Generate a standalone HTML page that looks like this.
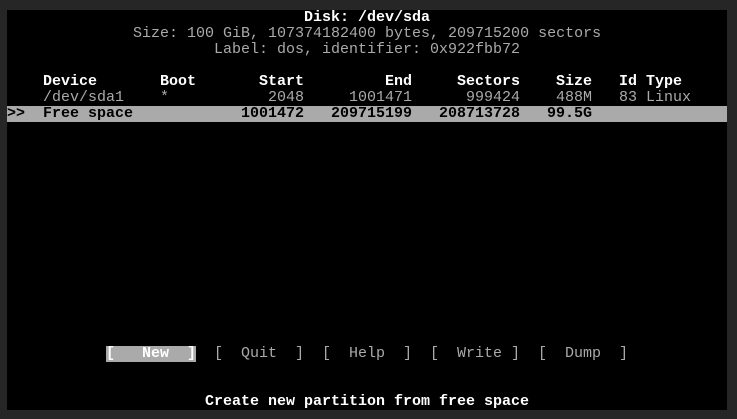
<!DOCTYPE html>
<html><head><meta charset="utf-8"><style>
html,body{margin:0;padding:0;background:#262626;width:737px;height:419px;overflow:hidden}
#t{position:absolute;left:7px;top:10px;width:720px;height:400px;background:#000;font-family:"Liberation Mono",monospace;font-size:15px;line-height:16px;color:#aaa}
#t span{position:absolute;white-space:pre}
.b{font-weight:bold;color:#fff}
.hl{position:absolute;left:0;top:96px;width:720px;height:16px;background:#aaa}
.k{color:#000;font-weight:bold}
.btn{background:#aaa;color:#fff;font-weight:bold}
</style></head><body>
<div id="t">
<span class="b" style="left:297px;top:0">Disk: /dev/sda</span>
<span style="left:126px;top:16px">Size: 100 GiB, 107374182400 bytes, 209715200 sectors</span>
<span style="left:207px;top:32px">Label: dos, identifier: 0x922fbb72</span>

<span class="b" style="left:36px;top:64px">Device</span>
<span class="b" style="left:153px;top:64px">Boot</span>
<span class="b" style="left:252px;top:64px">Start</span>
<span class="b" style="left:378px;top:64px">End</span>
<span class="b" style="left:450px;top:64px">Sectors</span>
<span class="b" style="left:549px;top:64px">Size</span>
<span class="b" style="left:612px;top:64px">Id</span>
<span class="b" style="left:639px;top:64px">Type</span>

<span style="left:36px;top:80px">/dev/sda1</span>
<span style="left:153px;top:80px">*</span>
<span style="left:261px;top:80px">2048</span>
<span style="left:342px;top:80px">1001471</span>
<span style="left:459px;top:80px">999424</span>
<span style="left:549px;top:80px">488M</span>
<span style="left:612px;top:80px">83</span>
<span style="left:639px;top:80px">Linux</span>

<div class="hl"></div>
<span class="k" style="left:0;top:96px">&gt;&gt;</span>
<span class="k" style="left:36px;top:96px">Free space</span>
<span class="k" style="left:234px;top:96px">1001472</span>
<span class="k" style="left:324px;top:96px">209715199</span>
<span class="k" style="left:432px;top:96px">208713728</span>
<span class="k" style="left:540px;top:96px">99.5G</span>

<span class="btn" style="left:99px;top:336px">[   New  ]</span>
<span style="left:207px;top:336px">[  Quit  ]</span>
<span style="left:315px;top:336px">[  Help  ]</span>
<span style="left:423px;top:336px">[  Write ]</span>
<span style="left:531px;top:336px">[  Dump  ]</span>

<span class="b" style="left:198px;top:384px">Create new partition from free space</span>
</div>
</body></html>
